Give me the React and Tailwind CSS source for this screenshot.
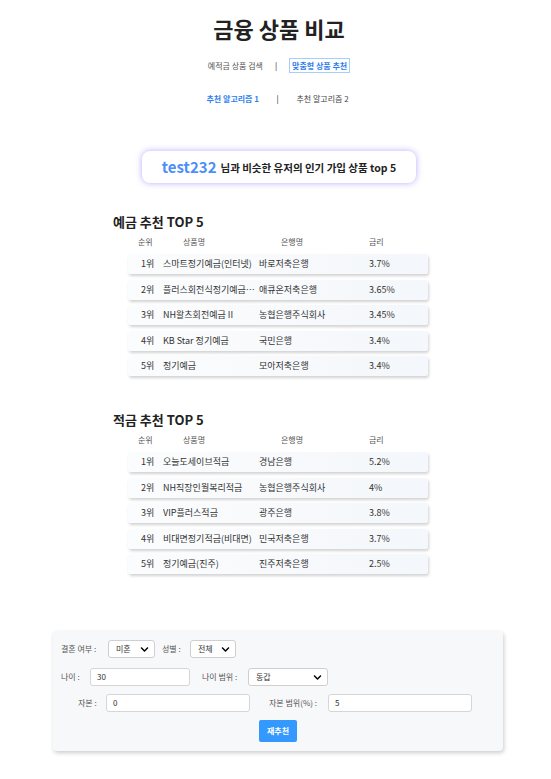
import React from 'react';
import { FaChevronDown } from 'react-icons/fa';

const deposits = [
  ['1위', '스마트정기예금(인터넷)', '바로저축은행', '3.7%'],
  ['2위', '플러스회전식정기예금…', '애큐온저축은행', '3.65%'],
  ['3위', 'NH왈츠회전예금 II', '농협은행주식회사', '3.45%'],
  ['4위', 'KB Star 정기예금', '국민은행', '3.4%'],
  ['5위', '정기예금', '모아저축은행', '3.4%'],
];

const savings = [
  ['1위', '오늘도세이브적금', '경남은행', '5.2%'],
  ['2위', 'NH직장인월복리적금', '농협은행주식회사', '4%'],
  ['3위', 'VIP플러스적금', '광주은행', '3.8%'],
  ['4위', '비대면정기적금(비대면)', '민국저축은행', '3.7%'],
  ['5위', '정기예금(진주)', '진주저축은행', '2.5%'],
];

function Top5({ title, rows, className }) {
  return (
    <div className={'w-[315px] ml-[106px] ' + className}>
      <h2 className="text-[13px] leading-[16px] font-bold text-[#222]">{title}</h2>
      <div className="flex text-[8px] leading-[12px] text-[#555] mt-[6px] ml-[15px]">
        <span className="w-[55px] pl-[10px]">순위</span>
        <span className="w-[98px]">상품명</span>
        <span className="w-[88px]">은행명</span>
        <span>금리</span>
      </div>
      <div className="flex flex-col gap-[5.5px] mt-[6px] ml-[15px] w-[300px]">
        {rows.map((r) => (
          <div
            key={r[0]}
            className="flex items-center h-[20px] rounded-[3px] bg-gradient-to-r from-[#fbfcfd] to-[#f4f7fb] shadow-[1px_2px_3px_rgba(0,0,0,0.18)] text-[9px] text-[#333] whitespace-nowrap"
          >
            <span className="w-[35px] pl-[13px]">{r[0]}</span>
            <span className="w-[96px] overflow-hidden">{r[1]}</span>
            <span className="w-[110px]">{r[2]}</span>
            <span>{r[3]}</span>
          </div>
        ))}
      </div>
    </div>
  );
}

function Select({ value, w }) {
  return (
    <div className={'flex items-center justify-between h-[18px] bg-white border border-[#cfcfcf] rounded-[3px] pl-[7px] pr-[5px] text-[8px] text-[#333] ' + w}>
      <span>{value}</span>
      <FaChevronDown className="w-[9px] h-[9px] text-black" />
    </div>
  );
}

function Input({ value, w }) {
  return (
    <div className={'flex items-center h-[18px] bg-white border border-[#d6d6d6] rounded-[3px] px-[6px] text-[8px] text-[#333] ' + w}>
      {value}
    </div>
  );
}

export default function App() {
  return (
    <div
      className="min-h-screen bg-white pl-[7px] pb-[26px]"
      style={{ fontFamily: '"Noto Sans CJK KR", "Noto Sans", sans-serif' }}
    >
      <h1 className="text-center text-[22px] leading-[28px] font-bold text-[#222] pt-[14px]">금융 상품 비교</h1>

      <div className="flex justify-center items-center gap-[12px] mt-[16px] text-[8px] leading-[13px]">
        <span className="text-[#555]">예적금 상품 검색</span>
        <span className="text-[#222]">|</span>
        <span className="text-[#2f80ed] font-semibold border border-[#a9cdfb] px-[2px]">맞춤형 상품 추천</span>
      </div>

      <div className="flex justify-center items-center mt-[20px] text-[8px] leading-[12px]">
        <span className="text-[#2f80ed] font-bold w-[70px]">추천 알고리즘 1</span>
        <span className="text-[#222] w-[20px]">|</span>
        <span className="text-[#444] w-[55px]">추천 알고리즘 2</span>
      </div>

      <div className="flex justify-center mt-[46px]">
        <div className="flex items-center justify-center gap-[4px] w-[274px] h-[32px] rounded-[8px] bg-white shadow-[0_0_6px_rgba(120,100,255,0.55)]">
          <span className="text-[15px] font-bold text-[#4d8ef7]">test232</span>
          <span className="text-[10.5px] font-bold text-[#222] mt-[2px]">님과 비슷한 유저의 인기 가입 상품 top 5</span>
        </div>
      </div>

      <Top5 title="예금 추천 TOP 5" rows={deposits} className="mt-[31px]" />
      <Top5 title="적금 추천 TOP 5" rows={savings} className="mt-[36px]" />

      <div className="ml-[46px] mt-[57px] w-[450px] h-[120px] rounded-[4px] bg-[#f7f8fa] shadow-[1px_2px_4px_rgba(0,0,0,0.2)] pt-[9px] text-[8px] text-[#555]">
        <div className="flex items-center pl-[8px]">
          <span className="w-[47px]">결혼 여부 :</span>
          <Select value="미혼" w="w-[47px]" />
          <span className="ml-[7px] w-[28px]">성별 :</span>
          <Select value="전체" w="w-[46px]" />
        </div>
        <div className="flex items-center pl-[8px] mt-[10px]">
          <span className="w-[29px]">나이 :</span>
          <Input value="30" w="w-[100px]" />
          <span className="ml-[12px] w-[46px]">나이 범위 :</span>
          <Select value="동갑" w="w-[80px]" />
        </div>
        <div className="flex items-center pl-[25px] mt-[8px]">
          <span className="w-[28px]">자본 :</span>
          <Input value="0" w="w-[144px]" />
          <span className="ml-[19px] w-[59px]">자본 범위(%) :</span>
          <Input value="5" w="w-[144px]" />
        </div>
        <div className="flex justify-center mt-[8px]">
          <button className="w-[38px] h-[22px] bg-[#3399ff] text-white text-[8px] font-bold rounded-[2px]">재추천</button>
        </div>
      </div>
    </div>
  );
}
